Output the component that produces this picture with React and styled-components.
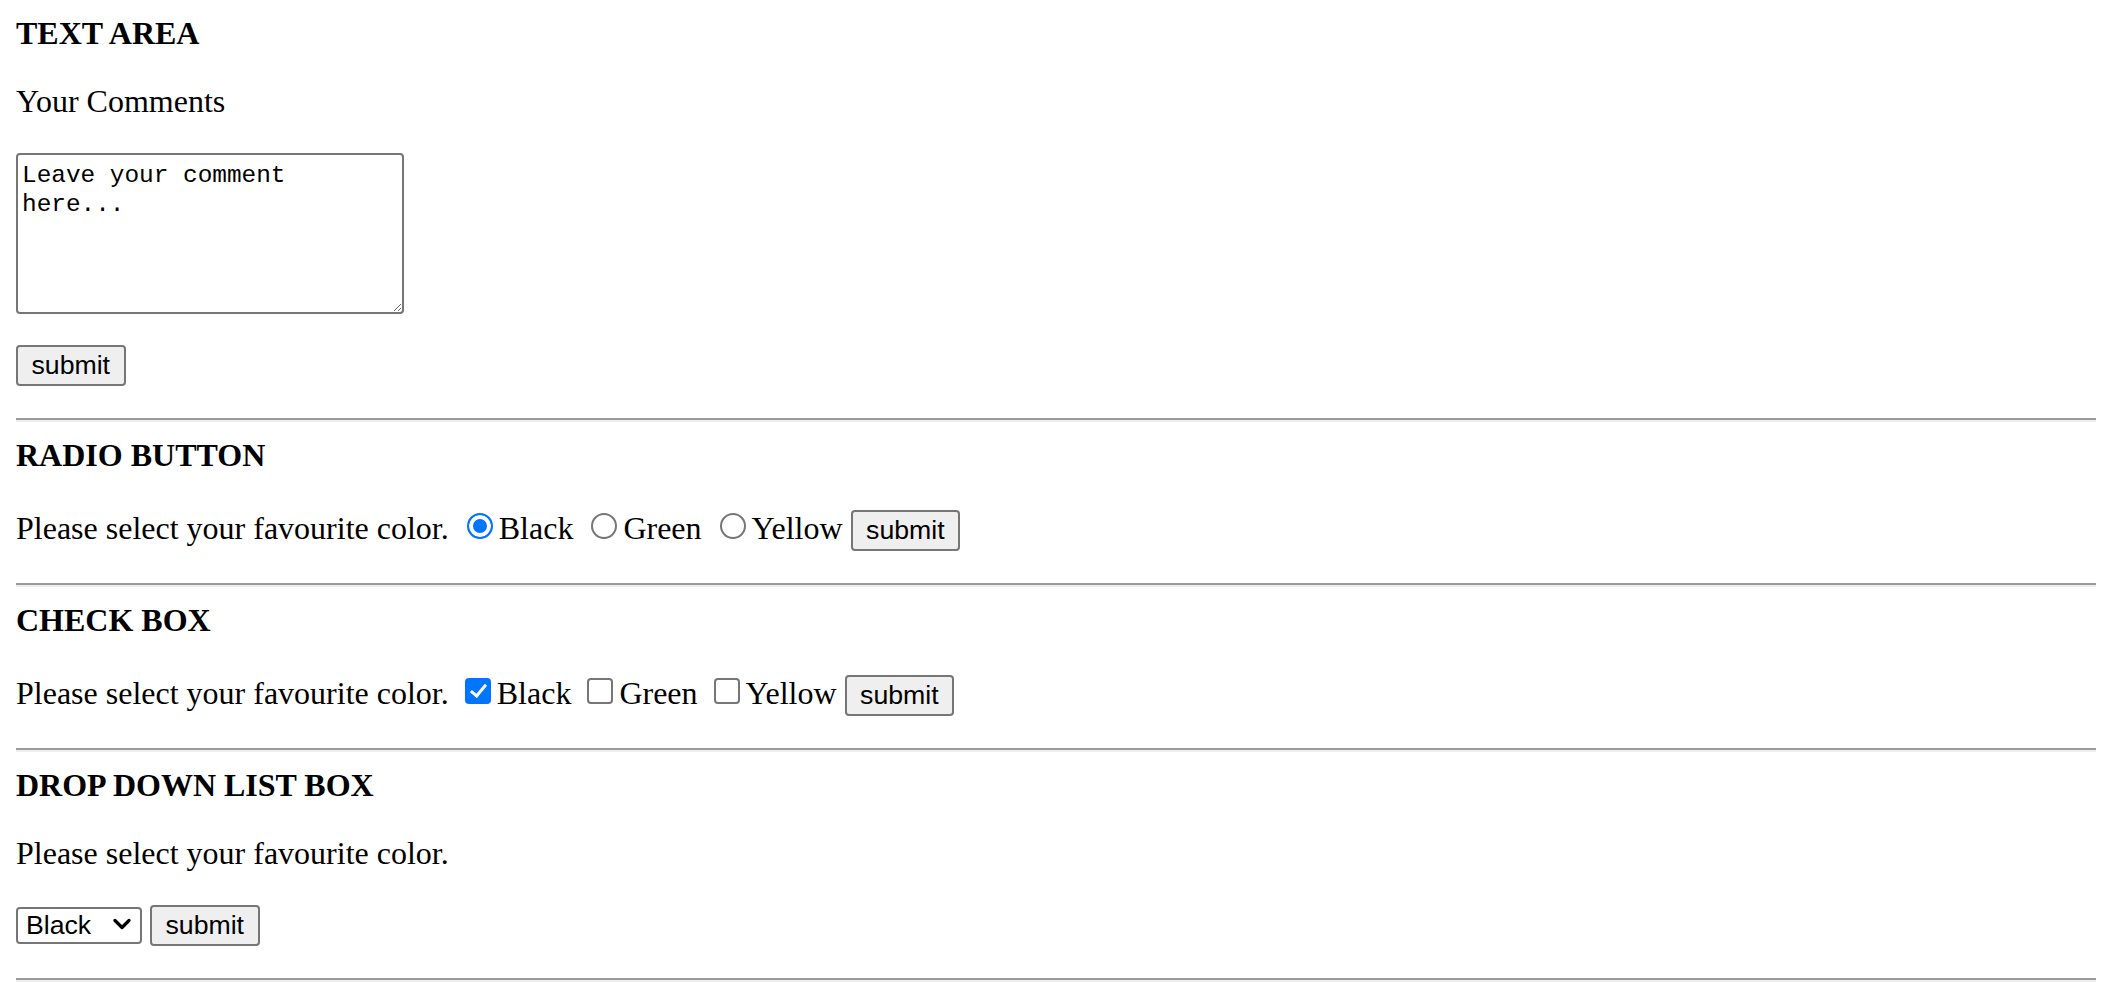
import React from "react";
import styled, { createGlobalStyle } from "styled-components";

const GlobalStyle = createGlobalStyle`
  html,
  body {
    margin: 0;
    background: #fff;
  }

  body {
    font-family: "Liberation Serif", "Times New Roman", serif;
    font-size: 32px;
    color: #000;
  }
`;

function App() {
  return (
    <>
      <GlobalStyle />
      <Page>
        <Section>
          <Heading $first>TEXT AREA</Heading>
          <Text>Your Comments</Text>
          <CommentBox defaultValue="Leave your comment here..." />
          <Row $top={31}>
            <SubmitButton>submit</SubmitButton>
          </Row>
        </Section>

        <Divider />

        <Section>
          <Heading>RADIO BUTTON</Heading>
          <Row>
            Please select your favourite color.{" "}
            <Radio name="color" defaultChecked />
            Black{" "}
            <Radio name="color" />
            Green{" "}
            <Radio name="color" />
            Yellow <SubmitButton>submit</SubmitButton>
          </Row>
        </Section>

        <Divider />

        <Section>
          <Heading>CHECK BOX</Heading>
          <Row>
            Please select your favourite color.{" "}
            <Check defaultChecked />
            Black{" "}
            <Check />
            Green{" "}
            <Check />
            Yellow <SubmitButton>submit</SubmitButton>
          </Row>
        </Section>

        <Divider />

        <Section>
          <Heading>DROP DOWN LIST BOX</Heading>
          <Text>Please select your favourite color.</Text>
          <Row>
            <SelectWrap>
              <Dropdown defaultValue="black">
                <option value="black">Black</option>
                <option value="green">Green</option>
                <option value="yellow">Yellow</option>
              </Dropdown>
              <Chevron viewBox="0 0 18 12" width="18" height="12">
                <path
                  d="M2 2.5 L9 9.5 L16 2.5"
                  fill="none"
                  stroke="#000"
                  strokeWidth="3.2"
                  strokeLinecap="round"
                  strokeLinejoin="round"
                />
              </Chevron>
            </SelectWrap>{" "}
            <SubmitButton>submit</SubmitButton>
          </Row>
        </Section>

        <Divider />
      </Page>
    </>
  );
}

export default App;

const Page = styled.div`
  display: flex;
  flex-direction: column;
  padding: 15px 16px 16px;
`;

const Section = styled.div`
  display: flex;
  flex-direction: column;
  align-items: flex-start;
`;

const Heading = styled.h4`
  margin: ${(p) => (p.$first ? "0" : "15px")} 0 0;
  font-size: 32px;
  font-weight: bold;
  line-height: 37px;
`;

const Text = styled.p`
  margin: 31px 0 0;
  line-height: 37px;
`;

const Row = styled.p`
  margin: ${(p) => p.$top || 33}px 0 0;
  line-height: 37px;
  white-space: nowrap;
`;

const CommentBox = styled.textarea`
  box-sizing: border-box;
  width: 388px;
  height: 161px;
  margin: 33px 0 0;
  padding: 6px 4px 4px;
  border: 2px solid #767676;
  border-radius: 4px;
  font-family: "Liberation Mono", "DejaVu Sans Mono", monospace;
  font-size: 24.4px;
  line-height: 29.4px;
  color: #000;
`;

const SubmitButton = styled.button`
  box-sizing: border-box;
  height: 41px;
  margin: 0;
  padding: 0 13.5px;
  border: 2px solid #767676;
  border-radius: 4px;
  background: #efefef;
  color: #000;
  font-family: "Liberation Sans", Arial, sans-serif;
  font-size: 26.67px;
  vertical-align: baseline;
`;

const Radio = styled.input.attrs({ type: "radio" })`
  appearance: none;
  box-sizing: border-box;
  width: 26px;
  height: 26px;
  margin: 6px 6px 0 10px;
  border: 2px solid #767676;
  border-radius: 50%;
  background: #fff;

  &:checked {
    border-color: #0075ff;
    background: #0075ff;
    box-shadow: inset 0 0 0 4px #fff;
  }
`;

const Check = styled.input.attrs({ type: "checkbox" })`
  appearance: none;
  position: relative;
  box-sizing: border-box;
  width: 26px;
  height: 26px;
  margin: 6px 6px 0 8px;
  border: 2px solid #767676;
  border-radius: 4px;
  background: #fff;

  &:checked {
    border-color: #0075ff;
    background: #0075ff;
  }

  &:checked::after {
    content: "";
    position: absolute;
    left: 7px;
    top: 1px;
    width: 6px;
    height: 13px;
    border-right: 3.5px solid #fff;
    border-bottom: 3.5px solid #fff;
    transform: rotate(40deg);
  }
`;

const SelectWrap = styled.span`
  position: relative;
  display: inline-block;
`;

const Dropdown = styled.select`
  appearance: none;
  box-sizing: border-box;
  width: 126px;
  height: 37px;
  margin: 0;
  padding: 0 8px;
  border: 2px solid #767676;
  border-radius: 4px;
  background: #fff;
  color: #000;
  font-family: "Liberation Sans", Arial, sans-serif;
  font-size: 26.67px;
`;

const Chevron = styled.svg`
  position: absolute;
  right: 11px;
  top: 50%;
  margin-top: -6px;
  pointer-events: none;
`;

const Divider = styled.hr`
  align-self: stretch;
  height: 0;
  margin: 32px 0 0;
  border: 0;
  border-top: 2px solid #9a9a9a;
  border-bottom: 2px solid #eeeeee;
`;
